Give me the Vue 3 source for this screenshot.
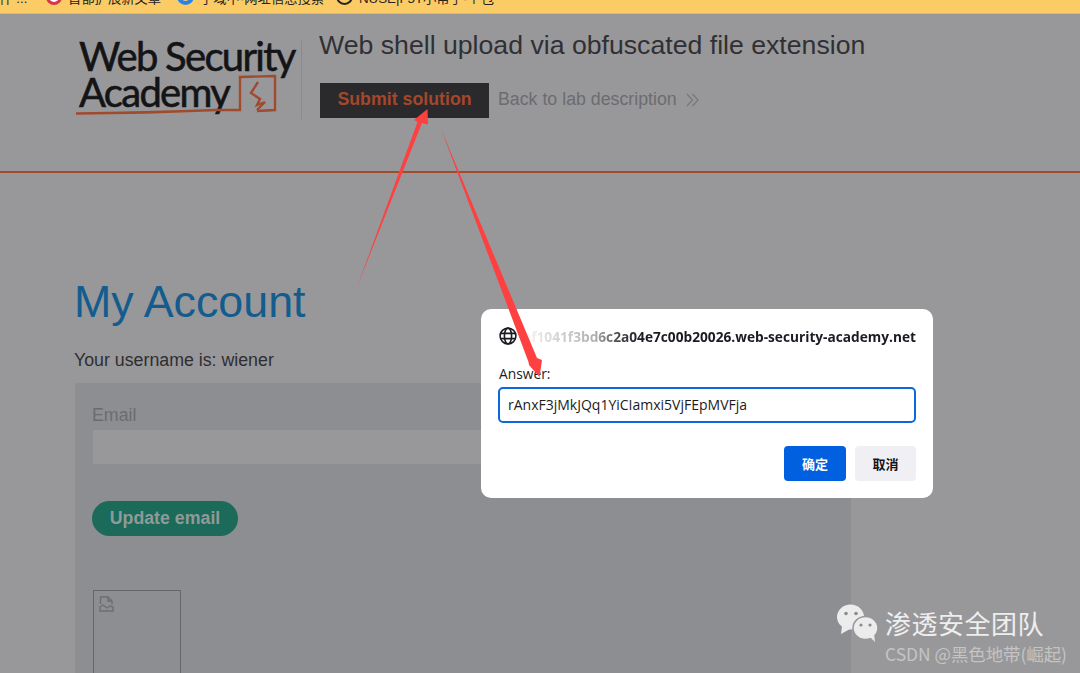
<script setup>
const bookmarks = [
  { label: '首都扩展新文章', width: 101, icon: 'red' },
  { label: '子域中·网址信息搜索', width: 128, icon: 'blue' },
  { label: 'NUSE|F5T小帮手·个包', width: 136, icon: 'globe' }
]
</script>

<template>
  <div class="page">
    <div class="bookmarks">
      <span class="crumb">文件 ...</span>
      <div v-for="b in bookmarks" :key="b.label" class="bookmark">
        <span class="favicon" :class="b.icon"></span>
        <span class="bookmark-label" :style="{ width: b.width + 'px' }">{{ b.label }}</span>
      </div>
    </div>

    <header class="lab-header">
      <div class="logo">
        <div class="logo-word first">Web Security</div>
        <div class="logo-word">Academy</div>
        <svg class="logo-mark" width="226" height="50" viewBox="0 0 226 50" fill="none">
          <path d="M1 40.5 Q70 40 142 37 L165 37 L165 4 L200 3 L200 37 L182 38" stroke="#a04a2e" stroke-width="2.4" />
          <path d="M183 9 L176 20 L185 26 L182 32 L190 29 L182 37" stroke="#a04a2e" stroke-width="2.4" />
        </svg>
      </div>
      <div class="lab-info">
        <h2 class="lab-title">Web shell upload via obfuscated file extension</h2>
        <div class="lab-actions">
          <button class="submit">Submit solution</button>
          <a class="back">Back to lab description</a>
          <svg width="13" height="14" viewBox="0 0 13 14" fill="none" stroke="#77777b" stroke-width="1.2">
            <path d="M1 1 L6.5 7 L1 13" />
            <path d="M6.5 1 L12 7 L6.5 13" />
          </svg>
        </div>
      </div>
    </header>

    <main class="content">
      <h1 class="heading">My Account</h1>
      <p class="username">Your username is: wiener</p>
      <section class="panel">
        <label class="email-label">Email</label>
        <div class="email-input"></div>
        <button class="update">Update email</button>
        <div class="broken-image">
          <svg width="15" height="16" viewBox="0 0 15 16" fill="none" stroke="#6e6e72" stroke-width="1.4">
            <path d="M1.5 8 V1 H9 L13 5 V8.5" />
            <path d="M9 1 V5 H13" />
            <path d="M1 11 L4 9 L8 12 L11 10 L14 11 V15 H1 Z" />
          </svg>
        </div>
      </section>
    </main>

    <div class="dialog">
      <div class="dialog-title">
        <svg width="18" height="18" viewBox="0 0 18 18" fill="none" stroke="#1c1b22" stroke-width="1.6">
          <circle cx="9" cy="9" r="7.9" />
          <ellipse cx="9" cy="9" rx="3.6" ry="7.9" />
          <path d="M1.4 6.4 H16.6 M1.4 11.6 H16.6" />
        </svg>
        <span class="origin">0af1041f3bd6c2a04e7c00b20026.web-security-academy.net</span>
      </div>
      <div class="answer-label">Answer:</div>
      <div class="answer-input">rAnxF3jMkJQq1YiCIamxi5VjFEpMVFja</div>
      <div class="dialog-buttons">
        <button class="ok">确定</button>
        <button class="cancel">取消</button>
      </div>
    </div>

    <svg class="arrows" width="1080" height="673" viewBox="0 0 1080 673">
      <polygon fill="#ff4040" points="357,287 417.5,122 414,120 427.5,109 428,124.5 422,123" />
      <polygon fill="#ff4040" points="441,129 537,358 542,360 539.5,377 529,365 528.5,362" />
    </svg>

    <div class="watermark">
      <div class="wm-row">
        <svg width="41" height="38" viewBox="0 0 41 38" fill="#ececec">
          <ellipse cx="13.5" cy="13" rx="13.5" ry="12.5" />
          <path d="M5 22 L4 30 L13 25 Z" />
          <ellipse cx="28.5" cy="24" rx="12.5" ry="11.5" stroke="#98989a" stroke-width="1.5" />
          <path d="M33 33 L38 38 L37 30 Z" />
          <circle cx="9" cy="9.5" r="1.8" fill="#8c8c8e" />
          <circle cx="19" cy="9.5" r="1.8" fill="#8c8c8e" />
          <circle cx="24" cy="21" r="1.6" fill="#8c8c8e" />
          <circle cx="33" cy="21" r="1.6" fill="#8c8c8e" />
        </svg>
        <span class="wm-title">渗透安全团队</span>
      </div>
      <div class="wm-sub">CSDN @黑色地带(崛起)</div>
    </div>
  </div>
</template>

<style>
html, body { margin: 0; }
</style>

<style scoped>
.page {
  position: relative;
  width: 1080px;
  height: 673px;
  overflow: hidden;
  background: #98989a;
  font-family: "Liberation Sans", Arial, sans-serif;
}
.bookmarks {
  height: 13px;
  background: #fbcb66;
  display: flex;
  align-items: flex-start;
  overflow: hidden;
  font-family: "Liberation Sans", "Noto Sans CJK SC", sans-serif;
  font-size: 13.3px;
  line-height: 20px;
  color: #26221c;
  box-shadow: 0 1px 0 #e6b95c;
  position: relative;
}
.crumb {
  width: 46px;
  flex: none;
  margin-left: -14px;
  margin-right: 14px;
  margin-top: -11px;
  white-space: nowrap;
}
.bookmark {
  display: flex;
  align-items: flex-start;
  gap: 6px;
  margin-right: 8px;
  margin-top: -11px;
  white-space: nowrap;
}
.bookmark-label { display: block; }
.favicon {
  width: 16px;
  height: 16px;
  border-radius: 50%;
  box-sizing: border-box;
  flex: none;
}
.favicon.red { border: 3px solid #d8364a; background: #fff; }
.favicon.blue { width: 17px; height: 17px; margin-top: -1px; border: 4px solid #2a82e8; background: #fbcb66; }
.favicon.globe { width: 17px; height: 17px; margin-top: -1px; border: 2px solid #222; background: #fbcb66; }

.lab-header {
  height: 158px;
  border-bottom: 2px solid #a04a2e;
  display: flex;
  padding-left: 75px;
}
.logo {
  position: relative;
  width: 227px;
  height: 79px;
  margin-top: 27px;
  padding-left: 4px;
  box-sizing: border-box;
  border-right: 1px solid #8a8a8c;
  font-family: Lato, sans-serif;
  color: #141416;
}
.logo-word {
  font-size: 40px;
  line-height: 36px;
  letter-spacing: -1.7px;
  white-space: nowrap;
  -webkit-text-stroke: 0.6px #141416;
}
.logo-word.first { margin-top: -2px; }
.logo-mark {
  position: absolute;
  left: 0;
  top: 33px;
}
.lab-info { margin-left: 17px; }
.lab-title {
  margin: 16px 0 0;
  font-size: 26.66px;
  line-height: 33px;
  font-weight: 400;
  color: #303034;
  white-space: nowrap;
}
.lab-actions {
  margin-top: 21px;
  display: flex;
  align-items: center;
  margin-left: 1px;
}
.submit {
  width: 169px;
  height: 35px;
  border: 0;
  padding: 0 0 2px;
  background: #2a2a2c;
  color: #a4472c;
  font: bold 17.78px "Liberation Sans", Arial, sans-serif;
}
.back {
  margin-left: 9px;
  margin-top: -2px;
  font-size: 17.78px;
  color: #6c6c70;
}
.lab-actions svg { margin-left: 9px; margin-top: -1px; }

.content { padding-left: 74px; }
.heading {
  margin: 102px 0 0;
  font-size: 44.8px;
  line-height: 52px;
  font-weight: 400;
  color: #145c8e;
}
.username {
  margin: 22px 0 0;
  font-size: 17.78px;
  line-height: 22px;
  color: #2e2e32;
}
.panel {
  margin: 12px 0 0 1px;
  width: 776px;
  height: 320px;
  background: #8d8e91;
  padding: 22px 18px 0;
  box-sizing: border-box;
}
.email-label {
  display: block;
  margin-left: -1px;
  font-size: 17.78px;
  line-height: 20px;
  color: #6c6c70;
}
.email-input {
  margin-top: 5px;
  height: 34px;
  background: #98989a;
}
.update {
  display: block;
  margin: 37px 0 0 -1px;
  width: 146px;
  height: 35px;
  border: 0;
  padding: 0;
  border-radius: 18px;
  background: #1b6a5a;
  color: #909a98;
  font: bold 17.78px "Liberation Sans", Arial, sans-serif;
}
.broken-image {
  margin-top: 54px;
  width: 88px;
  height: 120px;
  border: 1px solid #66666a;
  box-sizing: border-box;
  padding: 5px;
}
.broken-image svg { display: block; }

.dialog {
  position: absolute;
  left: 481px;
  top: 309px;
  width: 452px;
  height: 189px;
  box-sizing: border-box;
  padding: 18px 17px 0;
  background: #fff;
  border-radius: 10px;
  font-family: "Open Sans", sans-serif;
  color: #1c1b22;
}
.dialog-title {
  display: flex;
  align-items: center;
  height: 18px;
  gap: 7px;
  margin-left: 1px;
}
.dialog-title svg { flex: none; }
.origin {
  width: 392px;
  font-size: 13.7px;
  font-weight: 700;
  white-space: nowrap;
  overflow: hidden;
  direction: rtl;
  color: transparent;
  background: linear-gradient(90deg, #f4f4f4 1%, #d4d4d4 8%, #b0b0b0 18%, #4a4a4e 24%, #1c1b22 30%);
  -webkit-background-clip: text;
  background-clip: text;
}
.answer-label {
  margin-top: 20px;
  margin-left: 1px;
  font-size: 13.8px;
  line-height: 18px;
}
.answer-input {
  margin-top: 4px;
  width: 418px;
  height: 36px;
  box-sizing: border-box;
  border: 2px solid #0a68dc;
  border-radius: 5px;
  padding-left: 8px;
  font-size: 14px;
  line-height: 32px;
}
.dialog-buttons {
  margin-top: 23px;
  display: flex;
  justify-content: flex-end;
  gap: 9px;
}
.dialog-buttons button {
  width: 62px;
  height: 35px;
  border: 0;
  padding: 0;
  border-radius: 4px;
  font: bold 13px "Noto Sans CJK SC", sans-serif;
}
.ok { background: #0060df; color: #fbfbfe; }
.dialog-buttons .cancel { background: #f0f0f4; color: #15141a; width: 61px; }

.arrows {
  position: absolute;
  left: 0;
  top: 0;
  pointer-events: none;
}
.watermark {
  position: absolute;
  left: 837px;
  top: 604px;
  font-family: "Noto Sans CJK SC", sans-serif;
}
.wm-row {
  display: flex;
  align-items: center;
  gap: 7px;
}
.wm-title {
  font-size: 26px;
  line-height: 38px;
  color: #eeeeee;
  letter-spacing: 0.5px;
  white-space: nowrap;
}
.wm-sub {
  margin: 2px 0 0 48px;
  font-size: 17.4px;
  line-height: 20px;
  color: #c4c4c4;
  white-space: nowrap;
}
</style>
